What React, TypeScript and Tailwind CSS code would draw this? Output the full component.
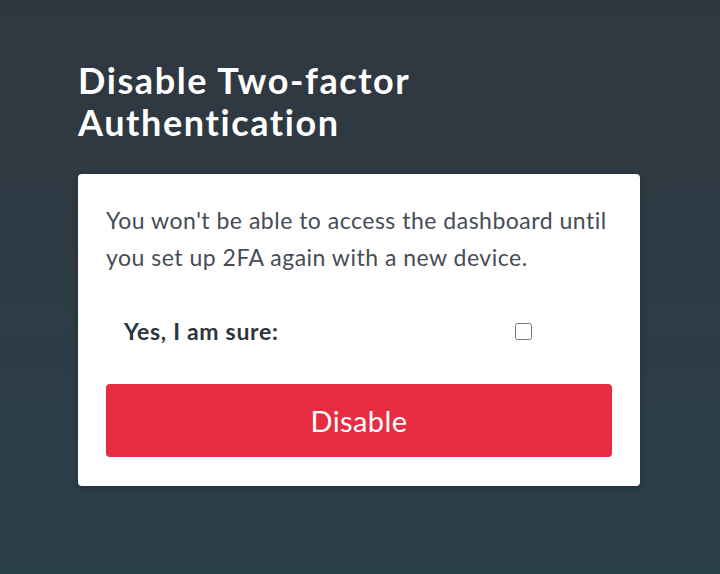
import React from 'react';

export default function App() {
  return (
    <div className="min-h-[574px] w-full bg-gradient-to-b from-[#30373f] to-[#2a404b] font-['Lato','Noto_Sans',sans-serif] [font-variant-ligatures:none]">
      <div className="ml-[78px] w-[562px] pt-[59px]">
        <h1 className="text-[36px] leading-[42px] font-bold tracking-[1.6px] text-white">
          Disable Two-factor
          <br />
          Authentication
        </h1>

        <div className="mt-[31px] rounded-[4px] bg-white px-[28px] pt-[28px] pb-[29px] shadow-[0_2px_6px_rgba(0,0,0,0.25)]">
          <p className="text-[23px] leading-[37px] tracking-[0.5px] text-[#464c55]">
            You won't be able to access the dashboard until you set up 2FA again with a new device.
          </p>

          <label className="mt-[34px] flex h-[42px] items-center">
            <span className="ml-[18px] w-[391px] text-[23px] font-bold tracking-[0.7px] text-[#2e343b]">Yes, I am sure:</span>
            <input type="checkbox" className="h-[17px] w-[17px] m-0" />
          </label>

          <button
            type="button"
            className="mt-[32px] flex h-[73px] w-full items-center justify-center rounded-[4px] bg-[#e62d42] text-[29px] tracking-[0.4px] text-white"
          >
            Disable
          </button>
        </div>
      </div>
    </div>
  );
}
